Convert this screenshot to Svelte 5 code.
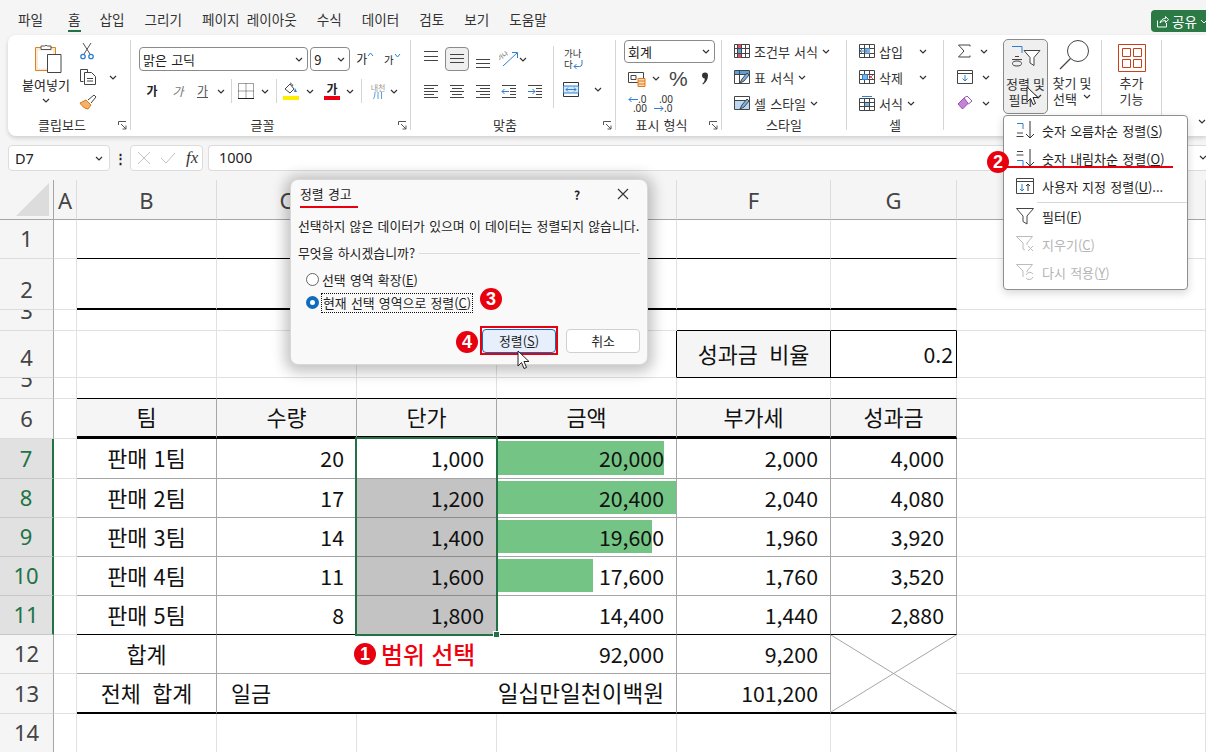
<script>
  const menus = ['파일', '홈', '삽입', '그리기', '페이지 레이아웃', '수식', '데이터', '검토', '보기', '도움말'];
  const colHeads = ['A', 'B', 'C', 'D', 'E', 'F', 'G', 'H'];

  const blank = (n, cls = '') => Array.from({ length: n }, () => ({ t: '', cls }));
  const c = (t, cls = '') => ({ t, cls });

  const sales = [
    ['판매 1팀', '20', '1,000', '20,000', '2,000', '4,000', 166],
    ['판매 2팀', '17', '1,200', '20,400', '2,040', '4,080', 178],
    ['판매 3팀', '14', '1,400', '19,600', '1,960', '3,920', 154],
    ['판매 4팀', '11', '1,600', '17,600', '1,760', '3,520', 95],
    ['판매 5팀', '8', '1,800', '14,400', '1,440', '2,880', 0]
  ];

  const rows = [
    { n: 1, cells: blank(6, 'bk') },
    { n: 2, cells: blank(6, 'bk2') },
    { n: 3, cells: [...blank(4), ...blank(2, 'bk')] },
    { n: 4, cells: [...blank(3), c('', 'rk'), c('성과금 비율', 'mid wide soft rk bk'), c('0.2', 'end tight rk bk')] },
    { n: 5, cells: blank(6, 'bk') },
    { n: 6, cells: ['팀', '수량', '단가', '금액', '부가세', '성과금'].map((t) => c(t, 'mid soft tb bk3')) },
    ...sales.map((s, i) => ({
      n: 7 + i,
      sel: true,
      cells: [
        c(s[0], `mid tb ${i === 4 ? 'bk' : ''}`),
        c(s[1], `end tb ${i === 4 ? 'bk' : ''}`),
        c(s[2], `end tb ${i === 4 ? 'bk' : ''} ${i > 0 ? 'pick' : ''}`),
        { t: s[3], cls: `end tb bar ${i === 4 ? 'bk' : ''}`, bar: s[6] },
        c(s[4], `end tb ${i === 4 ? 'bk' : ''}`),
        c(s[5], `end tb ${i === 4 ? 'bk' : ''}`)
      ]
    }))
  ];

  const sortItems = [
    { t: '숫자 오름차순 정렬(', k: 'S', e: ')', icon: 'asc' },
    { t: '숫자 내림차순 정렬(', k: 'O', e: ')', icon: 'desc' },
    { t: '사용자 지정 정렬(', k: 'U', e: ')...', icon: 'custom' },
    { t: '필터(', k: 'F', e: ')', icon: 'filter' },
    { t: '지우기(', k: 'C', e: ')', icon: 'clear', off: true },
    { t: '다시 적용(', k: 'Y', e: ')', icon: 'again', off: true }
  ];
</script>

{#snippet chev()}
  <svg class="chev" width="8" height="5" viewBox="0 0 8 5"><path d="M1 1l3 3 3-3" fill="none" stroke="#333" stroke-width="1.2" /></svg>
{/snippet}

{#snippet launcher()}
  <svg class="launch" width="9" height="9" viewBox="0 0 9 9"><path d="M.5 4V.5H8M3 3l5 5M8 4.500V8H4.500" fill="none" stroke="#555" /></svg>
{/snippet}

{#snippet cursor()}
  <svg width="14" height="20" viewBox="0 0 14 20"><path d="M1 1v15l3.500-3.500 2.500 6 2.500-1-2.500-6H12z" fill="#fff" stroke="#222" /></svg>
{/snippet}

<div class="app">
  <nav class="menu">
    {#each menus as m}
      <span class="tab" class:on={m === '홈'} class:first={m === '파일'}>{m}</span>
    {/each}
    <span class="share"><svg width="13" height="13" viewBox="0 0 13 13"><path d="M1.500 5.500v6.500h9V8M4 8c.5-3 3-4.500 5.500-4.500V1.500L12.500 4.700 9.500 7.500V5.700C7.500 5.500 5.500 6.300 4 8z" fill="none" stroke="#fff" /></svg>공유<svg width="8" height="5" viewBox="0 0 8 5"><path d="M1 1l3 3 3-3" fill="none" stroke="#fff" /></svg></span>
  </nav>

  <section class="ribbon">
    <div class="group g-clip">
      <div class="body clip">
        <div class="paste">
          <svg width="28" height="31" viewBox="0 0 28 31">
            <path d="M1.500 4.500h20v23h-20z" fill="#fbe9cf" stroke="#d98324" />
            <path d="M4 7.500h15v18H4z" fill="#fff" />
            <path d="M7 4.500V3h3.500a2 2 0 0 1 3 0H17v3.500H7z" fill="#fff" stroke="#555" />
            <path d="M13.500 11.500h13.500v18H13.500z" fill="#fff" stroke="#444" />
          </svg>
          <span>붙여넣기</span>
          {@render chev()}
        </div>
        <div class="clip-tools">
          <svg width="16" height="18" viewBox="0 0 16 18"><path d="M4 1l7 11M12 1L5 12" stroke="#555" fill="none" /><circle cx="4" cy="14.500" r="2.200" fill="none" stroke="#2f7fd0" stroke-width="1.300" /><circle cx="12" cy="14.500" r="2.200" fill="none" stroke="#2f7fd0" stroke-width="1.300" /></svg>
          <div class="copy-row">
            <svg width="18" height="18" viewBox="0 0 18 18"><path d="M1.500 1.500h7v3M1.500 1.500v12h3" fill="none" stroke="#444" /><path d="M5.500 4.500h7l4 4v8h-11zM8 10.500h6M8 13h6" fill="#fff" stroke="#444" /></svg>
            {@render chev()}
          </div>
          <svg width="18" height="16" viewBox="0 0 18 16"><path d="M1 9l6-3 5 5-3 4c-2.500 0-6-2.500-8-6z" fill="#f3b169" stroke="#d9771c" /><path d="M9 6l6-5 2 2-5 6" fill="#fff" stroke="#444" /></svg>
        </div>
      </div>
      <div class="glabel">클립보드{@render launcher()}</div>
    </div>

    <div class="group g-font">
      <div class="body font">
        <div class="font-top">
          <div class="select fname"><span>맑은 고딕</span>{@render chev()}</div>
          <div class="select fsize"><span>9</span>{@render chev()}</div>
          <span class="grow">가<svg width="7" height="5" viewBox="0 0 7 5"><path d="M1 4l2.500-3L6 4" fill="none" stroke="#2f7fd0" /></svg></span>
          <span class="grow small">가<svg width="7" height="5" viewBox="0 0 7 5"><path d="M1 1l2.500 3L6 1" fill="none" stroke="#2f7fd0" /></svg></span>
        </div>
        <div class="font-row">
          <span class="ga bold">가</span>
          <span class="ga ital">가</span>
          <span class="ga und">가</span>
          {@render chev()}
          <i class="vsep"></i>
          <svg width="16" height="16" viewBox="0 0 16 16"><path d="M.5.500h15v15H.5zM8 .5v15M.5 8h15" fill="none" stroke="#444" stroke-dasharray="1 1" /><path d="M0 15.500h16" stroke="#222" /></svg>
          {@render chev()}
          <i class="vsep"></i>
          <div class="swatch">
            <svg width="16" height="13" viewBox="0 0 16 13"><path d="M2 7l5-5 4 5-4 4z" fill="#fff" stroke="#444" /><path d="M7 1c1 0 2 1 3 3" stroke="#444" fill="none" /><path d="M12 6l2 4h-3z" fill="#2f7fd0" /></svg>
            <b class="yellow"></b>
          </div>
          {@render chev()}
          <div class="swatch"><span class="ga bold lift">가</span><b class="red"></b></div>
          {@render chev()}
          <i class="vsep"></i>
          <span class="phon">내천<svg width="10" height="7" viewBox="0 0 10 7"><path d="M2 0c0 3-.5 5-1.500 7M5 0v7M8.500 0v7" stroke="#5aa0dc" fill="none" /></svg></span>
          {@render chev()}
        </div>
      </div>
      <div class="glabel">글꼴{@render launcher()}</div>
    </div>

    <div class="group g-align">
      <div class="body align">
        <div class="align-left">
          <div class="al-row">
            <span class="slot"><svg width="16" height="24" viewBox="0 0 16 24"><path d="M1 4.500h14M1 9.500h14M1 13.500h14" stroke="#444" /></svg></span>
            <span class="slot pressed"><svg width="16" height="12" viewBox="0 0 16 12"><path d="M1 1.500h14M1 5.500h14M1 9.500h14" stroke="#444" /></svg></span>
            <span class="slot"><svg width="16" height="24" viewBox="0 0 16 24"><path d="M1 12.500h14M1 16.500h14M1 20.500h14" stroke="#444" /></svg></span>
            <span class="slot">
              <svg width="20" height="18" viewBox="0 0 20 18"><path d="M4 16L18 3M13 2.500h5.500V8" fill="none" stroke="#2f7fd0" /><text x="0" y="9" font-size="6" fill="#444" transform="rotate(-35 3 9)">가나</text></svg>
            </span>
            <span class="slot left">{@render chev()}</span>
          </div>
          <div class="al-row">
            <span class="slot"><svg width="16" height="14" viewBox="0 0 16 14"><path d="M1 1.500h14M1 4.500h10M1 7.500h14M1 10.500h10M1 13.500h14" stroke="#444" /></svg></span>
            <span class="slot"><svg width="16" height="14" viewBox="0 0 16 14"><path d="M1 1.500h14M3 4.500h10M1 7.500h14M3 10.500h10M1 13.500h14" stroke="#444" /></svg></span>
            <span class="slot"><svg width="16" height="14" viewBox="0 0 16 14"><path d="M1 1.500h14M5 4.500h10M1 7.500h14M5 10.500h10M1 13.500h14" stroke="#444" /></svg></span>
            <span class="slot"><svg width="16" height="14" viewBox="0 0 16 14"><path d="M1 1.500h14M9 4.500h6M9 7.500h6M9 10.500h6M1 13.500h14" stroke="#444" /><path d="M8 7.500H1M3.500 5L1 7.500 3.500 10" fill="none" stroke="#2f7fd0" /></svg></span>
            <span class="slot"><svg width="16" height="14" viewBox="0 0 16 14"><path d="M1 1.500h14M9 4.500h6M9 7.500h6M9 10.500h6M1 13.500h14" stroke="#444" /><path d="M1 7.500h7M5.500 5L8 7.500 5.500 10" fill="none" stroke="#2f7fd0" /></svg></span>
          </div>
        </div>
        <i class="vsep tall"></i>
        <div class="align-right">
          <div class="wrap"><span>가나<br />다</span><svg width="10" height="10" viewBox="0 0 10 10"><path d="M9 0v4a2.500 2.500 0 0 1-2.500 2.500H1M3.500 4L1 6.500 3.500 9" fill="none" stroke="#2f7fd0" /></svg></div>
          <div class="merge">
            <svg width="16" height="15" viewBox="0 0 16 15"><path d="M.5.500h15v14H.5z" fill="#fff" stroke="#333" /><path d="M.5 4h15v7H.5z" fill="#d8eafb" stroke="#2f7fd0" /><path d="M3 7.500h10M5 5.500l-2 2 2 2M11 5.500l2 2-2 2" fill="none" stroke="#2f7fd0" /></svg>
            {@render chev()}
          </div>
        </div>
      </div>
      <div class="glabel">맞춤{@render launcher()}</div>
    </div>

    <div class="group g-num">
      <div class="body num">
        <div class="select nfmt"><span>회계</span>{@render chev()}</div>
        <div class="num-row">
          <svg width="18" height="16" viewBox="0 0 18 16"><path d="M.5 1.500h15v10H.5z" fill="#fff" stroke="#444" /><path d="M3 4.500h5v4H3z" fill="none" stroke="#444" /><path d="M10 7.500h7v8h-7z" fill="#f8d9b8" stroke="#e07b16" /><path d="M10 10h7M10 13h7" stroke="#e07b16" /></svg>
          {@render chev()}
          <span class="pct">%</span>
          <svg class="comma" width="8" height="14" viewBox="0 0 8 14"><path d="M1 3.500a3 3 0 1 1 6 0c0 4-2 7-5 9l-.7-.8c1.500-1.300 2.400-2.700 2.500-5.300A3 3 0 0 1 1 3.500z" fill="#333" /></svg>
        </div>
        <div class="num-row dec">
          <span class="dec-ic"><svg width="10" height="7" viewBox="0 0 10 7"><path d="M10 3.500H1M3.500 1L1 3.500 3.500 6" fill="none" stroke="#2f7fd0" /></svg><em>.0</em><em class="two">.00</em></span>
          <span class="dec-ic"><em class="two top">.00</em><svg width="10" height="7" viewBox="0 0 10 7"><path d="M0 3.500h9M6.500 1L9 3.500 6.500 6" fill="none" stroke="#2f7fd0" /></svg><em>.0</em></span>
        </div>
      </div>
      <div class="glabel">표시 형식{@render launcher()}</div>
    </div>

    <div class="group g-style">
      <div class="body stack">
        <div class="line">
          <svg width="16" height="14" viewBox="0 0 16 14"><path d="M.5.500h15v13H.5z" fill="#fff" stroke="#444" /><path d="M3.500 .5h4v4h-4zM3.500 9.500h4v4h-4z" fill="#e25563" /><path d="M3.500 4.500h4v5h-4z" fill="#5aa0dc" /><path d="M.5 4.500h15M.5 9.500h15M3.500.5v13M7.500.5v13M11.500.5v13" stroke="#444" fill="none" /></svg>
          <span>조건부 서식</span>{@render chev()}
        </div>
        <div class="line">
          <svg width="16" height="14" viewBox="0 0 16 14"><path d="M.5.500h15v13H.5z" fill="#fff" stroke="#444" /><path d="M1 1h14v3H1z" fill="#5aa0dc" /><path d="M.5 4.500h15M5.500.5v13" stroke="#444" /><path d="M6 13l2-4 5-6 2 2-5 6z" fill="#7db4e6" stroke="#444" /></svg>
          <span>표 서식</span>{@render chev()}
        </div>
        <div class="line">
          <svg width="16" height="14" viewBox="0 0 16 14"><path d="M.5.500h15v13H.5z" fill="#bcd8f3" stroke="#444" /><path d="M1 1h14v3H1z" fill="#fff" /><path d="M.5 4.500h15" stroke="#444" /><path d="M6 13l2-4 5-6 2 2-5 6z" fill="#7db4e6" stroke="#444" /></svg>
          <span>셀 스타일</span>{@render chev()}
        </div>
      </div>
      <div class="glabel">스타일</div>
    </div>

    <div class="group g-cell">
      <div class="body stack">
        <div class="line">
          <svg width="16" height="14" viewBox="0 0 16 14"><path d="M.5.500h15v13H.5zM.5 4.500h15M.5 9.500h15M5.500.5v13M10.500.5v13" fill="#fff" stroke="#444" /><path d="M6 4.500h5v5H6z" fill="#7db4e6" /><path d="M8 7H1M3 5L1 7l2 2" fill="none" stroke="#2f7fd0" /></svg>
          <span class="grow-t">삽입</span>{@render chev()}
        </div>
        <div class="line">
          <svg width="16" height="14" viewBox="0 0 16 14"><path d="M.5.500h15v13H.5zM.5 4.500h15M.5 9.500h15M5.500.5v13M10.500.5v13" fill="#fff" stroke="#444" /><path d="M3.500 4.500h5v5h-5z" fill="#7db4e6" stroke="#2f7fd0" /><path d="M10 5l4 4M14 5l-4 4" stroke="#e25563" /></svg>
          <span class="grow-t">삭제</span>{@render chev()}
        </div>
        <div class="line">
          <svg width="16" height="15" viewBox="0 0 16 15"><path d="M.5 2.500h15v12H.5zM.5 6.500h15M.5 10.500h15M5.500 2.500v12M10.500 2.500v12" fill="#fff" stroke="#444" /><path d="M6 7h4v3H6z" fill="#7db4e6" /><path d="M3 .5h10" stroke="#2f7fd0" /></svg>
          <span>서식</span>{@render chev()}
        </div>
      </div>
      <div class="glabel">셀</div>
    </div>

    <div class="group g-edit">
      <div class="body edit">
        <div class="edit-small">
          <div class="line"><svg width="14" height="14" viewBox="0 0 14 14"><path d="M13 2.500V1H1.500L7 7l-5.500 6H13v-1.500" fill="none" stroke="#444" /></svg>{@render chev()}</div>
          <div class="line"><svg width="16" height="14" viewBox="0 0 16 14"><path d="M.5.500h15v13H.5zM.5 3.500h15" fill="#fff" stroke="#444" /><path d="M8 5v6M5.500 8.500L8 11l2.500-2.500" fill="none" stroke="#2f7fd0" /></svg>{@render chev()}</div>
          <div class="line"><svg width="16" height="14" viewBox="0 0 16 14"><path d="M1 8l6-6 4.500 5-6 6z" fill="#c583d6" stroke="#9b4db3" /><path d="M7 2l3-2 5 5-3.500 3z" fill="#fff" stroke="#9b4db3" /></svg>{@render chev()}</div>
        </div>
        <div class="big sortbtn">
          <svg width="34" height="24" viewBox="0 0 34 24">
            <path d="M3 2.500h10V9" fill="none" stroke="#2f7fd0" />
            <path d="M15 6.500h16l-6 7v8l-4-2.500v-5.500z" fill="#fff" stroke="#444" />
            <path d="M6 12.500h4M3 15.500h10" fill="none" stroke="#444" />
            <ellipse cx="8" cy="19.500" rx="4.500" ry="2.500" fill="none" stroke="#444" />
          </svg>
          <span>정렬 및</span>
          <span>필터 {@render chev()}</span>
        </div>
        <div class="big findbtn">
          <svg width="30" height="30" viewBox="0 0 30 30"><circle cx="19" cy="11" r="10.500" fill="#fff" stroke="#444" /><path d="M11.500 18.500L1 29" stroke="#444" stroke-width="1.300" /></svg>
          <span>찾기 및</span>
          <span>선택 {@render chev()}</span>
        </div>
      </div>
    </div>

    <div class="group g-add">
      <div class="body">
        <div class="big addbtn">
          <svg width="28" height="28" viewBox="0 0 28 28"><path d="M.5.500h27v27H.5z" fill="#fff" stroke="#c8401c" /><path d="M4.500 4.500h8v8h-8zM15.500 4.500h8v8h-8zM4.500 15.500h8v8h-8zM15.500 15.500h8v8h-8z" fill="none" stroke="#c8401c" /></svg>
          <span>추가</span>
          <span>기능</span>
        </div>
      </div>
    </div>
    <div class="rest">{@render chev()}</div>
  </section>

  <div class="formula">
    <div class="namebox"><span>D7</span>{@render chev()}</div>
    <span class="dots">⋮</span>
    <div class="fxbox">
      <svg width="14" height="14" viewBox="0 0 14 14"><path d="M1 1l12 12M13 1L1 13" stroke="#c4c4c4" /></svg>
      <svg width="16" height="12" viewBox="0 0 16 12"><path d="M1 6l5 5L15 1" fill="none" stroke="#c4c4c4" /></svg>
      <em>fx</em>
    </div>
    <div class="fxinput"><span>1000</span>{@render chev()}</div>
  </div>

  <div class="sheet">
    <div class="corner"><svg width="34" height="34" viewBox="0 0 34 34"><path d="M33 0v33H0z" fill="#dcdcdc" /></svg></div>
    {#each colHeads as h}
      <div class="colh">{h === 'D' ? '' : h}</div>
    {/each}

    {#each rows as r}
      <div class="rowh" class:sel={r.sel}><span>{r.n}</span></div>
      <div class="cell"></div>
      {#each r.cells as x}
        <div class="cell {x.cls}" style={x.bar ? `--bar:${x.bar}px` : undefined}><span>{x.t}</span></div>
      {/each}
      <div class="cell"></div>
    {/each}

    <div class="rowh"><span>12</span></div>
    <div class="cell"></div>
    <div class="cell mid tb grey">합계</div>
    <div class="cell end tb grey s3">92,000</div>
    <div class="cell end tb grey">9,200</div>
    <div class="cell cross">
      <svg width="100%" height="100%" viewBox="0 0 100 100" preserveAspectRatio="none"><path d="M0 0L100 100M100 0L0 100" stroke="#a6a6a6" vector-effect="non-scaling-stroke" /></svg>
    </div>
    <div class="cell"></div>

    <div class="rowh"><span>13</span></div>
    <div class="cell"></div>
    <div class="cell mid wide tb bk2">전체 합계</div>
    <div class="cell tb bk2 s3 split"><span>일금</span><span class="words">일십만일천이백원</span></div>
    <div class="cell end tb bk2">101,200</div>
    <div class="cell"></div>

    <div class="rowh"><span>14</span></div>
    <div class="cell"></div>
    {#each blank(7) as _}
      <div class="cell"></div>
    {/each}

    <div class="selection"><i></i></div>
    <div class="pick-note"><b class="badge">1</b>범위 선택</div>
  </div>

  <div class="dialog">
    <header>
      <span class="dtitle">정렬 경고</span>
      <span class="help">?</span>
      <svg width="12" height="12" viewBox="0 0 12 12"><path d="M1 1l10 10M11 1L1 11" stroke="#333" stroke-width="1.100" /></svg>
    </header>
    <p class="warn">선택하지 않은 데이터가 있으며 이 데이터는 정렬되지 않습니다.</p>
    <div class="legend"><span>무엇을 하시겠습니까?</span><i></i></div>
    <label class="radio"><i class="dot"></i><span>선택 영역 확장(<u>E</u>)</span></label>
    <label class="radio"><i class="dot on"></i><span class="focus">현재 선택 영역으로 정렬(<u>C</u>)</span><b class="badge note">3</b></label>
    <div class="btns">
      <b class="badge">4</b>
      <span class="redbox"><button class="primary">정렬(<u>S</u>)</button></span>
      <button>취소</button>
    </div>
    <span class="dcursor">{@render cursor()}</span>
  </div>

  <div class="sortmenu">
    {#each sortItems as it}
      {#if it.icon === 'filter'}<hr />{/if}
      <div class="mitem" class:off={it.off}>
        <span class="micon">
          {#if it.icon === 'asc'}
            <svg width="22" height="20" viewBox="0 0 22 20"><path d="M2 3.500h6V9" fill="none" stroke="#2f7fd0" /><path d="M2 13h6M1.500 16.500h7" stroke="#444" /><path d="M15 1v17M11 14l4 4 4-4" fill="none" stroke="#333" /></svg>
          {:else if it.icon === 'desc'}
            <svg width="22" height="20" viewBox="0 0 22 20"><path d="M2 3.500h6M1.500 7h7" stroke="#444" /><path d="M2 12.500h6V18" fill="none" stroke="#2f7fd0" /><path d="M15 1v17M11 14l4 4 4-4" fill="none" stroke="#333" /></svg>
          {:else if it.icon === 'custom'}
            <svg width="20" height="18" viewBox="0 0 20 18"><path d="M1.500 1.500h17v15h-17z" fill="#fff" stroke="#444" /><path d="M1.500 4.500h17" stroke="#444" /><path d="M7 7v7M5 12l2 2 2-2" fill="none" stroke="#2f7fd0" /><path d="M13 14V7M11 9l2-2 2 2" fill="none" stroke="#333" /></svg>
          {:else if it.icon === 'filter'}
            <svg width="20" height="18" viewBox="0 0 20 18"><path d="M1.500 1.500h17L12 9v8l-4-2.500V9z" fill="#fff" stroke="#444" /></svg>
          {:else if it.icon === 'clear'}
            <svg width="20" height="18" viewBox="0 0 20 18"><path d="M1.500 1.500h16L12 8v2M8 14v-6L1.500 1.500M8 14l2 1" fill="none" stroke="#bbb" /><path d="M13 11l5 5M18 11l-5 5" stroke="#bbb" /></svg>
          {:else}
            <svg width="20" height="18" viewBox="0 0 20 18"><path d="M1.500 1.500h16L12 8v1M8 14v-6L1.500 1.500" fill="none" stroke="#bbb" /><path d="M11 12a4 4 0 0 1 7-1M18 14a4 4 0 0 1-7 1" fill="none" stroke="#bbb" /></svg>
          {/if}
        </span>
        <span>{it.t}<u>{it.k}</u>{it.e}</span>
      </div>
    {/each}
  </div>

  <span class="sortcursor">{@render cursor()}</span>
  <i class="red-line menu-line"></i>
  <b class="badge menu-badge">2</b>
</div>

<style>
  :global(body) {
    margin: 0;
    background: #f5f5f5;
  }

  .app {
    position: relative;
    width: 1206px;
    height: 752px;
    overflow: hidden;
    background: #f5f5f5;
    font-family: 'Noto Sans CJK KR', 'Noto Sans', sans-serif;
    font-size: 13px;
    word-spacing: 0.1em;
    color: #222;
  }

  svg {
    flex: none;
    display: block;
  }

  /* top tabs */
  .menu {
    height: 35px;
    box-sizing: border-box;
    padding: 0 0 0 18px;
    display: flex;
    gap: 20px;
    align-items: flex-start;
  }

  .tab {
    font-size: 13.600px;
    line-height: 38px;
    height: 32px;
    white-space: nowrap;
    color: #333;
    box-sizing: border-box;
    word-spacing: 0.3em;
  }

  .tab.first {
    margin-right: 5px;
  }

  .tab.on {
    border-bottom: 2px solid #217346;
    margin-right: -1px;
  }

  .share {
    margin-left: auto;
    margin-top: 10px;
    width: 62px;
    flex: none;
    margin-right: -7px;
    height: 22px;
    background: #2b7a45;
    color: #fff;
    border-radius: 4px 0 0 4px;
    display: flex;
    align-items: center;
    gap: 3px;
    padding-left: 5px;
    box-sizing: border-box;
    font-size: 13.500px;
  }

  /* ribbon */
  .ribbon {
    margin-left: 8px;
    height: 101px;
    box-sizing: border-box;
    padding-top: 5px;
    background: #fff;
    border-radius: 8px 0 0 8px;
    box-shadow: 0 2px 4px rgba(0, 0, 0, 0.16);
    display: flex;
  }

  .group {
    height: 90px;
    box-sizing: border-box;
    border-right: 1px solid #d6d6d6;
    display: flex;
    flex-direction: column;
    flex: none;
  }

  .g-clip { width: 123px; }
  .g-font { width: 280px; }
  .g-align { width: 205px; }
  .g-num { width: 106px; }
  .g-style { width: 125px; }
  .g-cell { width: 97px; }
  .g-edit { width: 158px; }
  .g-add { width: 60px; }

  .rest {
    flex: 1;
    display: flex;
    justify-content: flex-end;
    align-items: flex-end;
    padding: 0 0 12px;
  }

  .body {
    height: 77px;
    flex: none;
    box-sizing: border-box;
  }

  .glabel {
    position: relative;
    height: 13px;
    line-height: 15px;
    text-align: center;
    font-size: 13px;
    color: #333;
  }

  .g-clip .glabel { padding-right: 14px; }
  .g-font .glabel { padding-right: 16px; }
  .g-align .glabel { padding-right: 16px; }
  .g-num .glabel { padding-right: 14px; }

  .launch {
    position: absolute;
    right: 3px;
    top: 4px;
  }

  /* clipboard */
  .clip {
    display: flex;
  }

  .paste {
    width: 54px;
    margin-left: 11px;
    display: flex;
    flex-direction: column;
    align-items: center;
    padding-top: 3px;
  }

  .paste svg:first-child {
    margin-left: 3px;
  }

  .paste span {
    line-height: 18px;
    margin-top: 2px;
    white-space: nowrap;
  }

  .paste .chev {
    margin-top: 4px;
  }

  .clip-tools {
    margin-left: 6px;
    display: flex;
    flex-direction: column;
    gap: 8px;
    padding-top: 2px;
  }

  .copy-row {
    display: flex;
    align-items: center;
    gap: 12px;
  }

  /* font */
  .font {
    padding: 7px 0 0 8px;
  }

  .font-top {
    display: flex;
    align-items: center;
  }

  .select {
    box-sizing: border-box;
    height: 24px;
    border: 1px solid #8a8a8a;
    border-radius: 4px;
    background: #fff;
    display: flex;
    align-items: center;
    justify-content: space-between;
    padding: 0 4px 0 3px;
    font-size: 13px;
    color: #222;
  }

  .fname { width: 170px; }
  .fsize { width: 40px; margin-left: 2px; }

  .grow {
    display: flex;
    align-items: flex-start;
    margin-left: 6px;
    font-size: 12px;
    width: 26px;
    line-height: 14px;
  }

  .grow.small {
    font-size: 10.500px;
    margin-left: 2px;
    padding-top: 2px;
  }

  .font-row {
    margin-top: 8px;
    display: grid;
    grid-template-columns: 26px 26px 23px 14px 6px 24px 14px 8px 22px 16px 28px 8px 14px 20px 12px;
    align-items: center;
    justify-items: center;
    height: 24px;
  }

  .ga {
    font-size: 12px;
    color: #444;
    line-height: 16px;
  }

  .ga.bold { font-weight: 700; color: #222; }
  .ga.ital { font-style: italic; color: #777; }
  .ga.und { text-decoration: underline; color: #555; }
  .ga.lift { line-height: 13px; }

  .vsep {
    display: block;
    width: 1px;
    height: 24px;
    background: #d6d6d6;
  }

  .vsep.tall {
    height: 62px;
    margin-top: 6px;
    flex: none;
  }

  .swatch {
    display: flex;
    flex-direction: column;
    align-items: center;
  }

  .swatch b {
    display: block;
    width: 16px;
    height: 4px;
    margin-top: 1px;
  }

  .yellow { background: #ffee00; }
  .red { background: #e8000f; }

  .phon {
    font-size: 8px;
    line-height: 9px;
    color: #999;
    display: flex;
    flex-direction: column;
    align-items: center;
  }

  /* alignment */
  .align {
    display: flex;
    padding-left: 7px;
  }

  .align-left {
    width: 130px;
    margin-right: 5px;
    padding-top: 7px;
  }

  .al-row {
    display: flex;
    height: 24px;
  }

  .al-row + .al-row {
    margin-top: 8px;
  }

  .slot {
    width: 26px;
    display: flex;
    align-items: center;
    justify-content: center;
    box-sizing: border-box;
  }

  .slot.left {
    justify-content: flex-start;
    margin-left: -3px;
  }

  .pressed {
    width: 24px;
    margin: 0 1px;
    border: 1px solid #8a8a8a;
    border-radius: 4px;
    background: #efefef;
  }

  .align-right {
    padding: 4px 0 0 10px;
  }

  .wrap {
    display: flex;
    align-items: flex-end;
    font-size: 9.500px;
    line-height: 11px;
    color: #333;
    height: 26px;
    word-spacing: 0;
  }

  .wrap svg {
    margin-left: -8px;
  }

  .merge {
    display: flex;
    align-items: center;
    gap: 15px;
    margin-top: 12px;
    margin-left: -1px;
  }

  /* number */
  .num {
    padding-left: 8px;
  }

  .nfmt {
    width: 91px;
    height: 23px;
  }

  .num-row {
    display: flex;
    align-items: center;
    height: 25px;
    margin-top: 3px;
    padding-left: 4px;
  }

  .num-row .chev {
    margin-left: 6px;
  }

  .pct {
    font-family: 'Liberation Sans', sans-serif;
    font-size: 21px;
    line-height: 25px;
    margin-left: 9px;
    color: #444;
  }

  .comma {
    margin-left: 13px;
  }

  .dec {
    gap: 7px;
    margin-top: 0;
  }

  .dec-ic {
    width: 19px;
    display: grid;
    grid-template-columns: 10px 9px;
    align-items: center;
    font-size: 10px;
    line-height: 9px;
    color: #333;
    white-space: nowrap;
  }

  .dec-ic em {
    font-style: normal;
    font-family: 'Noto Sans', sans-serif;
  }

  .dec-ic .two {
    grid-column: 1 / 3;
    text-align: right;
  }

  /* style + cells */
  .stack {
    display: flex;
    flex-direction: column;
    padding: 0 0 0 12px;
    margin-top: -2px;
    margin-bottom: 2px;
  }

  .line {
    height: 26px;
    flex: none;
    display: flex;
    align-items: center;
    gap: 4px;
    font-size: 13px;
    white-space: nowrap;
    color: #333;
  }

  .g-cell .stack {
    padding-right: 16px;
  }

  .grow-t {
    flex: 1;
  }

  /* edit */
  .edit {
    display: flex;
    padding-left: 13px;
  }

  .edit-small {
    width: 46px;
    margin-top: -2px;
  }

  .edit-small .line {
    gap: 9px;
  }

  .big {
    display: flex;
    flex-direction: column;
    align-items: center;
    font-size: 13px;
    line-height: 16px;
    white-space: nowrap;
    color: #333;
    word-spacing: 0;
  }

  .big span {
    display: flex;
    align-items: center;
    gap: 2px;
  }

  .big svg:first-child {
    margin-bottom: 3px;
  }

  .sortbtn {
    box-sizing: border-box;
    width: 45px;
    height: 75px;
    margin-top: -1px;
    padding-top: 4px;
    border: 1px solid #8a8a8a;
    border-radius: 5px;
    background: #efefef;
  }

  .sortbtn svg:first-child {
    margin-bottom: 8px;
  }

  .findbtn {
    width: 48px;
  }

  .findbtn svg:first-child {
    margin-left: 4px;
    margin-bottom: 5px;
  }

  .addbtn {
    padding-top: 4px;
  }

  /* formula bar */
  .formula {
    margin: 9px 0 0 8px;
    height: 26px;
    display: flex;
    align-items: stretch;
  }

  .namebox, .fxbox, .fxinput {
    box-sizing: border-box;
    background: #fff;
    border: 1px solid #dcdcdc;
    border-radius: 4px;
    display: flex;
    align-items: center;
  }

  .namebox {
    width: 102px;
    padding: 0 6px;
    justify-content: space-between;
    font-family: 'Noto Sans', sans-serif;
    font-size: 14.500px;
  }

  .dots {
    width: 20px;
    text-align: center;
    line-height: 26px;
    font-size: 13px;
    font-weight: 700;
  }

  .fxbox {
    width: 73px;
    gap: 9px;
    padding: 0 6px;
  }

  .fxbox em {
    font-family: 'Liberation Serif', serif;
    font-size: 17px;
    color: #333;
    margin-left: 1px;
  }

  .fxinput {
    flex: 1;
    margin-left: 5px;
    justify-content: space-between;
    padding: 0 0 2px 10px;
    font-family: 'Noto Sans', sans-serif;
    font-size: 14.500px;
    border-right: 0;
    border-radius: 4px 0 0 4px;
  }

  .fxinput .chev {
    margin-right: -1px;
  }

  /* sheet */
  .sheet {
    position: absolute;
    left: 0;
    top: 180px;
    width: 1206px;
    height: 572px;
    overflow: hidden;
    background: #fff;
    display: grid;
    grid-template-columns: 54px 23px 140px 140px 140px 180px 154px 126px 249px;
    grid-template-rows: 40px 39px 51px 21px 47px 21px 40px 40px 39px 39px 39px 39px 39px 40px 39px;
    font-size: 21.800px;
    color: #111;
  }

  .corner {
    background: #f5f5f5;
    border-right: 1px solid #a6a6a6;
    border-bottom: 1px solid #a6a6a6;
    box-sizing: border-box;
    padding: 3px 0 0 16px;
  }

  .colh, .rowh {
    box-sizing: border-box;
    background: #f5f5f5;
    font-family: 'Noto Sans', sans-serif;
    font-size: 22px;
    color: #444;
    overflow: hidden;
  }

  .colh {
    display: flex;
    align-items: center;
    justify-content: center;
    border-right: 1px solid #dcdcdc;
    border-bottom: 1px solid #a6a6a6;
  }

  .rowh {
    display: flex;
    align-items: flex-end;
    justify-content: center;
    border-right: 1px solid #a6a6a6;
    border-bottom: 1px solid #dcdcdc;
    line-height: 38px;
    padding-bottom: 1px;
  }

  .rowh span {
    flex: none;
    height: 38px;
  }

  .rowh.sel {
    background: #e1e1e1;
    color: #217346;
    border-right: 2px solid #217346;
    border-bottom-color: #c8c8c8;
  }

  .cell {
    box-sizing: border-box;
    border-right: 1px solid #e1e1e1;
    border-bottom: 1px solid #e1e1e1;
    display: flex;
    align-items: center;
    overflow: hidden;
    white-space: nowrap;
    min-width: 0;
    padding-bottom: 2px;
  }

  .mid { justify-content: center; }
  .end { justify-content: flex-end; padding-right: 12px; font-size: 21.300px; }
  .tight { padding-right: 3px; }
  .wide { word-spacing: 0.3em; }
  .soft { background: #f5f5f5; }
  .tb { border-right-color: #a6a6a6; border-bottom-color: #a6a6a6; }
  .grey { border-bottom-color: #a6a6a6; }
  .bk { border-bottom: 1px solid #000; }
  .bk2 { border-bottom: 2px solid #000; }
  .bk3 { border-bottom: 3px solid #000; }
  .rk { border-right: 1px solid #000; }
  .s3 { grid-column: span 3; }
  .pick { background: #c3c3c3; border-bottom-color: #8c8c8c; }

  .bar {
    background: linear-gradient(#74c585, #74c585) no-repeat 1px 2px / var(--bar, 0px) calc(100% - 5px);
  }

  .split {
    justify-content: space-between;
    padding: 0 12px 2px 14px;
  }

  .words {
    font-size: 22.600px;
  }

  .cross {
    grid-row: span 2;
    border-bottom: 2px solid #000;
    border-right: 1px solid #e1e1e1;
    padding-bottom: 0;
  }

  .selection {
    position: absolute;
    left: 355px;
    top: 257px;
    width: 143px;
    height: 199px;
    box-sizing: border-box;
    border: 2px solid #217346;
  }

  .selection i {
    position: absolute;
    right: -4px;
    bottom: -4px;
    width: 5px;
    height: 5px;
    background: #217346;
    border: 1px solid #fff;
  }

  .badge {
    display: inline-flex;
    align-items: center;
    justify-content: center;
    width: 22px;
    height: 22px;
    flex: none;
    border-radius: 50%;
    background: #e8000f;
    color: #fff;
    font-family: 'Liberation Sans', sans-serif;
    font-size: 18px;
    font-weight: 700;
  }

  .pick-note {
    position: absolute;
    left: 354px;
    top: 459px;
    display: flex;
    align-items: center;
    gap: 5px;
    color: #f0000f;
    font-size: 23.800px;
    font-weight: 500;
    line-height: 30px;
  }

  /* dialog */
  .dialog {
    position: absolute;
    left: 291px;
    top: 180px;
    width: 356px;
    height: 184px;
    box-sizing: border-box;
    padding: 0 7px;
    background: #f9f9f9;
    border-radius: 7px;
    box-shadow: 0 0 0 1px #d8d8d8, 0 2px 14px 6px rgba(0, 0, 0, 0.24);
    font-size: 12.900px;
    color: #222;
  }

  .dialog header {
    height: 28px;
    display: flex;
    align-items: center;
    padding: 0 11px 0 2px;
  }

  .dtitle {
    flex: 1;
    line-height: 26px;
    height: 26px;
  }

  .dtitle::after {
    content: '';
    display: block;
    width: 58px;
    height: 2px;
    margin-top: -1px;
    background: #e8000f;
  }

  .help {
    font-weight: 700;
    width: 43px;
    font-size: 12px;
  }

  .warn {
    margin: 10px 0 0;
    line-height: 16px;
    white-space: nowrap;
  }

  .legend {
    display: flex;
    align-items: center;
    gap: 4px;
    margin-top: 11px;
    line-height: 16px;
  }

  .legend i {
    flex: 1;
    height: 1px;
    background: #dcdcdc;
  }

  .radio {
    display: flex;
    align-items: center;
    gap: 3px;
    height: 23px;
    padding-left: 8px;
  }

  .legend + .radio {
    margin-top: 7px;
  }

  .dot {
    box-sizing: border-box;
    width: 13px;
    height: 13px;
    border: 1px solid #666;
    border-radius: 50%;
    background: #fff;
  }

  .dot.on {
    border: 4px solid #0f6cbd;
  }

  .focus {
    outline: 1px dotted #111;
    padding: 0 1px;
    line-height: 18px;
  }

  .note {
    margin-left: 5px;
    margin-top: -7px;
  }

  .btns {
    display: flex;
    justify-content: flex-end;
    align-items: center;
    margin-top: 14px;
    gap: 10px;
  }

  .btns .badge {
    margin-right: -6px;
    margin-top: 3px;
  }

  .redbox {
    display: flex;
    flex: none;
    border: 2px solid #e8000f;
    margin: -3px -2px -2px;
    padding-top: 1px;
  }

  button {
    width: 74px;
    height: 24px;
    box-sizing: border-box;
    font: inherit;
    background: #fff;
    border: 1px solid #d0d0d0;
    border-radius: 4px;
    padding: 0;
    color: #222;
  }

  .primary {
    background: #e6effb;
    border-color: #0f6cbd;
  }

  .dcursor {
    position: absolute;
    left: 226px;
    top: 170px;
  }

  /* sort dropdown */
  .sortmenu {
    position: absolute;
    left: 1003px;
    top: 115px;
    width: 185px;
    height: 175px;
    box-sizing: border-box;
    background: #fff;
    border: 1px solid #8f8f8f;
    border-radius: 4px;
    box-shadow: 0 3px 8px rgba(0, 0, 0, 0.16);
  }

  .mitem {
    height: 28px;
    display: flex;
    align-items: center;
    font-size: 13px;
    color: #222;
    white-space: nowrap;
  }

  .mitem.off {
    color: #b4b4b4;
  }

  .micon {
    width: 38px;
    display: flex;
    justify-content: flex-start;
    padding-left: 11px;
    box-sizing: border-box;
  }

  hr {
    margin: 2px 0 -1px 33px;
    border: 0;
    height: 1px;
    background: #d6d6d6;
  }

  .sortcursor {
    position: absolute;
    left: 1026px;
    top: 86px;
  }

  .red-line {
    position: absolute;
    display: block;
    height: 2px;
    background: #e8000f;
  }

  .menu-line {
    left: 1006px;
    top: 166px;
    width: 167px;
  }

  .menu-badge {
    position: absolute;
    left: 987px;
    top: 151px;
  }
</style>
